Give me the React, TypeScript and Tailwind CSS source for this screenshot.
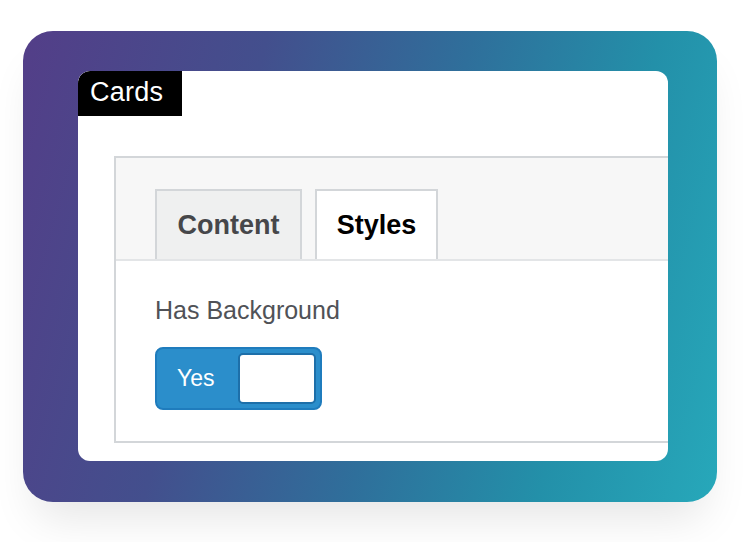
export default function App() {
  return (
    <div className="w-[754px] h-[542px] bg-white pt-[31px] pl-[23px] overflow-hidden font-['Liberation_Sans',Arial,sans-serif]">
      <div className="w-[694px] h-[471px] rounded-[30px] bg-[linear-gradient(105deg,#533e88_0%,#434f8d_30%,#2f6f9b_55%,#2390a9_78%,#27a8ba_100%)] pt-[40px] pl-[55px] shadow-[0_28px_44px_-12px_rgba(0,0,0,0.10)]">
        <div className="w-[590px] h-[390px] rounded-[12px] bg-white overflow-hidden">
          <div className="w-[104px] h-[45px] bg-black flex items-center pl-[12px] pb-[3px] rounded-tl-[12px]">
            <span className="text-white text-[27px] leading-none tracking-[0.01em]">Cards</span>
          </div>
          <div className="ml-[36px] mt-[40px] w-[600px] h-[287px] border-2 border-[#d3d6d9] flex flex-col">
            <div className="h-[103px] bg-[#f7f7f7] border-b-2 border-[#e3e5e7] flex items-end gap-[13px] pl-[39px]">
              <div className="w-[147px] h-[70px] bg-[#eff0f0] border-2 border-b-0 border-[#d3d6d9] flex items-center justify-center">
                <span className="text-[27px] font-bold text-[#46474a]">Content</span>
              </div>
              <div className="w-[123px] h-[70px] bg-white border-2 border-b-0 border-[#d3d6d9] flex items-center justify-center">
                <span className="text-[27px] font-bold text-black">Styles</span>
              </div>
            </div>
            <div className="pl-[39px] pt-[37px]">
              <div className="text-[25px] leading-none text-[#505257]">Has Background</div>
              <div className="mt-[24px] w-[167px] h-[63px] rounded-[8px] bg-[#2b8ecb] border-2 border-[#1f7cbd] flex items-center justify-between pl-[20px] pr-[4px]">
                <span className="text-[23px] text-white">Yes</span>
                <div className="w-[78px] h-[51px] bg-white rounded-[5px] border-2 border-[#1d6fa9]" />
              </div>
            </div>
          </div>
        </div>
      </div>
    </div>
  );
}
